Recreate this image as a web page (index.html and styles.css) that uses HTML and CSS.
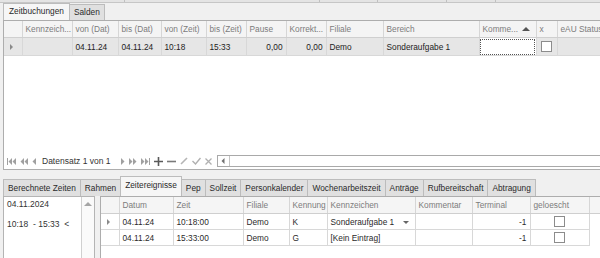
FILE: index.html
```html
<!DOCTYPE html>
<html lang="de">
<head>
    <meta charset="UTF-8">
    <title>Zeitbuchungen</title>
    <link rel="stylesheet" href="styles.css">
</head>
<body>
    <div class="top-strip">
        <span class="strip-cell w125"></span>
        <span class="strip-cell w195"></span>
        <span class="strip-cell w58"></span>
        <span class="strip-cell w69"></span>
        <span class="strip-cell w49"></span>
    </div>

    <div class="page">
        <div class="tabs">
            <span class="tab active">Zeitbuchungen</span>
            <span class="tab">Salden</span>
        </div>

        <div class="grid top-grid">
            <table class="table">
                <colgroup>
                    <col class="c18"><col class="c50"><col class="c46"><col class="c43"><col class="c45">
                    <col class="c40"><col class="c40"><col class="c40"><col class="c57"><col class="c96">
                    <col class="c57"><col class="c21"><col class="c70">
                </colgroup>
                <tr>
                    <th></th>
                    <th>Kennzeich...</th>
                    <th>von (Dat)</th>
                    <th>bis (Dat)</th>
                    <th>von (Zeit)</th>
                    <th>bis (Zeit)</th>
                    <th>Pause</th>
                    <th>Korrekt...</th>
                    <th>Filiale</th>
                    <th>Bereich</th>
                    <th class="sorted">Komme...<span class="sort-up"></span></th>
                    <th>x</th>
                    <th>eAU Status</th>
                </tr>
                <tr class="current">
                    <td class="indicator"><span class="row-arrow"></span></td>
                    <td></td>
                    <td>04.11.24</td>
                    <td>04.11.24</td>
                    <td>10:18</td>
                    <td>15:33</td>
                    <td class="num">0,00</td>
                    <td class="num">0,00</td>
                    <td>Demo</td>
                    <td>Sonderaufgabe 1</td>
                    <td class="focus"></td>
                    <td class="center"><span class="check"></span></td>
                    <td></td>
                </tr>
            </table>
            <div class="grid-empty"></div>
            <div class="navigator">
                <svg class="nav-icon" width="9" height="7" viewBox="0 0 9 7"><rect x="0" y="0" width="1" height="7" fill="#a0a0a0"/><path d="M5 0 L1.5 3.5 L5 7 Z M9 0 L5.5 3.5 L9 7 Z" fill="#a0a0a0"/></svg>
                <svg class="nav-icon" width="8" height="7" viewBox="0 0 8 7"><path d="M4 0 L0.5 3.5 L4 7 Z M8 0 L4.5 3.5 L8 7 Z" fill="#a0a0a0"/></svg>
                <svg class="nav-icon" width="4" height="7" viewBox="0 0 4 7"><path d="M4 0 L0.5 3.5 L4 7 Z" fill="#a0a0a0"/></svg>
                <span class="nav-text">Datensatz 1 von 1</span>
                <svg class="nav-icon" width="4" height="7" viewBox="0 0 4 7"><path d="M0 0 L3.5 3.5 L0 7 Z" fill="#a0a0a0"/></svg>
                <svg class="nav-icon" width="8" height="7" viewBox="0 0 8 7"><path d="M0 0 L3.5 3.5 L0 7 Z M4 0 L7.5 3.5 L4 7 Z" fill="#a0a0a0"/></svg>
                <svg class="nav-icon" width="9" height="7" viewBox="0 0 9 7"><path d="M0 0 L3.5 3.5 L0 7 Z M4 0 L7.5 3.5 L4 7 Z" fill="#a0a0a0"/><rect x="8" y="0" width="1" height="7" fill="#a0a0a0"/></svg>
                <svg class="nav-icon" width="9" height="9" viewBox="0 0 9 9"><path d="M4.5 0 V9 M0 4.5 H9" stroke="#5a5a5a" stroke-width="1.6"/></svg>
                <svg class="nav-icon" width="9" height="9" viewBox="0 0 9 9"><path d="M0 4.5 H9" stroke="#7a7a7a" stroke-width="1.6"/></svg>
                <svg class="nav-icon" width="8" height="8" viewBox="0 0 8 8"><path d="M1 7 L7 1" stroke="#b5b5b5" stroke-width="1.6"/></svg>
                <svg class="nav-icon" width="9" height="8" viewBox="0 0 9 8"><path d="M0.5 4 L3.5 7 L8.5 1" stroke="#b0b0b0" stroke-width="1.4" fill="none"/></svg>
                <svg class="nav-icon" width="7" height="7" viewBox="0 0 7 7"><path d="M0.5 0.5 L6.5 6.5 M6.5 0.5 L0.5 6.5" stroke="#b0b0b0" stroke-width="1.3"/></svg>
                <div class="hscroll">
                    <span class="hscroll-btn"><svg width="4" height="6" viewBox="0 0 4 6"><path d="M3.5 0 L0.5 3 L3.5 6 Z" fill="#707070"/></svg></span>
                </div>
            </div>
        </div>

        <div class="tabs lower-tabs">
            <span class="tab">Berechnete Zeiten</span>
            <span class="tab">Rahmen</span>
            <span class="tab active">Zeitereignisse</span>
            <span class="tab">Pep</span>
            <span class="tab">Sollzeit</span>
            <span class="tab">Personkalender</span>
            <span class="tab">Wochenarbeitszeit</span>
            <span class="tab">Anträge</span>
            <span class="tab">Rufbereitschaft</span>
            <span class="tab">Abtragung</span>
        </div>

        <div class="lower-panel">
            <div class="list-box">
                <div class="list">
                    <div class="list-item">04.11.2024</div>
                    <div class="list-item">10:18&nbsp; - 15:33 &nbsp;&lt;</div>
                </div>
                <div class="vscroll"><span class="scroll-up"></span></div>
            </div>

            <div class="grid lower-grid">
                <table class="table">
                    <colgroup>
                        <col class="c18"><col class="c54"><col class="c70"><col class="c46"><col class="c38">
                        <col class="c88"><col class="c57"><col class="c58"><col class="c59"><col class="c20">
                    </colgroup>
                    <tr>
                        <th></th>
                        <th>Datum</th>
                        <th>Zeit</th>
                        <th>Filiale</th>
                        <th>Kennung</th>
                        <th>Kennzeichen</th>
                        <th>Kommentar</th>
                        <th>Terminal</th>
                        <th>geloescht</th>
                        <th class="filler"></th>
                    </tr>
                    <tr>
                        <td class="indicator"><span class="row-arrow"></span></td>
                        <td>04.11.24</td>
                        <td>10:18:00</td>
                        <td>Demo</td>
                        <td>K</td>
                        <td class="combo">Sonderaufgabe 1<span class="drop"></span></td>
                        <td></td>
                        <td class="num">-1</td>
                        <td class="center"><span class="check"></span></td>
                        <td class="filler"></td>
                    </tr>
                    <tr>
                        <td class="indicator"></td>
                        <td>04.11.24</td>
                        <td>15:33:00</td>
                        <td>Demo</td>
                        <td>G</td>
                        <td>[Kein Eintrag]</td>
                        <td></td>
                        <td class="num">-1</td>
                        <td class="center"><span class="check"></span></td>
                        <td class="filler"></td>
                    </tr>
                </table>
            </div>
        </div>
    </div>
</body>
</html>
```

FILE: styles.css
```css
body {
    margin: 0;
    width: 600px;
    height: 258px;
    overflow: hidden;
    background-color: #f0f0f0;
    font-family: 'Liberation Sans', Arial, sans-serif;
    font-size: 8.3px;
    color: #222;
}
.top-strip {
    display: flex;
    height: 2px;
    background-color: #e4e4e4;
    border-bottom: 1px solid #c6c6c6;
}
.strip-cell {
    border-right: 1px solid #c0c0c0;
    box-sizing: border-box;
}
.w125 { width: 125px; }
.w195 { width: 195px; }
.w58 { width: 58px; }
.w69 { width: 69px; }
.w49 { width: 49px; }
.page {
    padding-left: 3px;
}
.tabs {
    display: flex;
    align-items: flex-end;
    height: 17px;
}
.tab {
    height: 15px;
    line-height: 15px;
    padding: 0 4px;
    border: 1px solid #bcbcbc;
    border-bottom: none;
    margin-right: -1px;
    background-color: #e0e0e0;
    color: #2a2a2a;
    white-space: nowrap;
}
.tab.active {
    height: 16px;
    padding: 0 5px;
    background-color: #f6f6f6;
}
.grid {
    background-color: #fff;
    border: 1px solid #adadad;
    box-sizing: border-box;
    overflow: hidden;
}
.top-grid {
    display: flex;
    flex-direction: column;
    width: 600px;
    height: 150px;
}
.table {
    border-collapse: collapse;
    table-layout: fixed;
}
.top-grid .table {
    width: 623px;
}
.lower-grid .table {
    width: 508px;
}
.c18 { width: 18px; }
.c20 { width: 20px; }
.c21 { width: 21px; }
.c38 { width: 38px; }
.c40 { width: 40px; }
.c43 { width: 43px; }
.c45 { width: 45px; }
.c46 { width: 46px; }
.c50 { width: 50px; }
.c54 { width: 54px; }
.c57 { width: 57px; }
.c58 { width: 58px; }
.c59 { width: 59px; }
.c70 { width: 70px; }
.c88 { width: 88px; }
.c96 { width: 96px; }
th {
    height: 16px;
    padding: 0 3px;
    background-color: #f4f4f4;
    color: #7c7c7c;
    font-weight: normal;
    text-align: left;
    white-space: nowrap;
    overflow: hidden;
    border-right: 1px solid #d6d6d6;
    border-bottom: 1px solid #cfcfcf;
}
td {
    height: 17px;
    padding: 0 3px;
    white-space: nowrap;
    overflow: hidden;
    border-right: 1px solid #d8d8d8;
    border-bottom: 1px solid #d8d8d8;
}
.current td {
    background-color: #e6e6e6;
}
.current td.focus {
    background-color: #fff;
    outline: 1px dotted #555;
    outline-offset: -2px;
}
.num {
    text-align: right;
}
.center {
    text-align: center;
}
.indicator {
    padding-left: 6px;
}
.row-arrow {
    display: inline-block;
    border-left: 3px solid #8a8a8a;
    border-top: 3px solid transparent;
    border-bottom: 3px solid transparent;
    vertical-align: middle;
}
.sorted {
    position: relative;
}
.sort-up {
    position: absolute;
    right: 6px;
    top: 6px;
    border-bottom: 4px solid #555;
    border-left: 4px solid transparent;
    border-right: 4px solid transparent;
}
.check {
    display: inline-block;
    width: 9px;
    height: 9px;
    border: 1px solid #8c8c8c;
    background-color: #fff;
    vertical-align: middle;
}
.grid-empty {
    flex: 1;
}
.navigator {
    display: flex;
    align-items: center;
    height: 14px;
    margin-bottom: 1px;
    padding-left: 3px;
    color: #333;
}
.nav-icon {
    margin-right: 4px;
}
.nav-text {
    margin: 0 10px 0 2px;
    font-size: 8.5px;
}
.hscroll {
    flex: 1;
    display: flex;
    height: 12px;
    margin-left: 1px;
    border: 1px solid #a9a9a9;
    box-sizing: border-box;
    background-color: #fff;
}
.hscroll-btn {
    display: flex;
    align-items: center;
    justify-content: center;
    width: 11px;
    border-right: 1px solid #c4c4c4;
}
.lower-tabs {
    margin-top: 8px;
    height: 18px;
}
.lower-tabs .tab {
    height: 16px;
    line-height: 16px;
    padding: 0 4px;
}
.lower-tabs .tab.active {
    height: 19px;
    line-height: 17px;
    padding: 0 4px;
}
.lower-panel {
    display: flex;
    gap: 5px;
    height: 62px;
}
.list-box {
    display: flex;
    width: 92px;
    background-color: #fff;
    border: 1px solid #b4b4b4;
    border-bottom: none;
    box-sizing: border-box;
}
.list {
    flex: 1;
    padding: 2px 0 0 3px;
    border-right: 1px solid #d0d0d0;
}
.list-item {
    height: 20px;
    line-height: 10px;
    font-size: 8.5px;
    color: #333;
}
.vscroll {
    width: 12px;
    display: flex;
    justify-content: center;
    background-color: #fafafa;
}
.scroll-up {
    margin-top: 5px;
    width: 0;
    height: 0;
    border-bottom: 4px solid #a5a5a5;
    border-left: 4px solid transparent;
    border-right: 4px solid transparent;
}
.lower-grid {
    flex: 1;
    border-bottom: none;
    border-right: none;
}
.lower-grid th {
    height: 16px;
    background-color: #f5f5f5;
}
.lower-grid td {
    height: 15px;
    color: #2a2a2a;
}
.lower-grid td.filler {
    border: none;
}
.lower-grid th.filler {
    border-right: none;
}
.combo {
    position: relative;
}
.drop {
    position: absolute;
    right: 6px;
    top: 7px;
    border-top: 3px solid #666;
    border-left: 3px solid transparent;
    border-right: 3px solid transparent;
}
```
